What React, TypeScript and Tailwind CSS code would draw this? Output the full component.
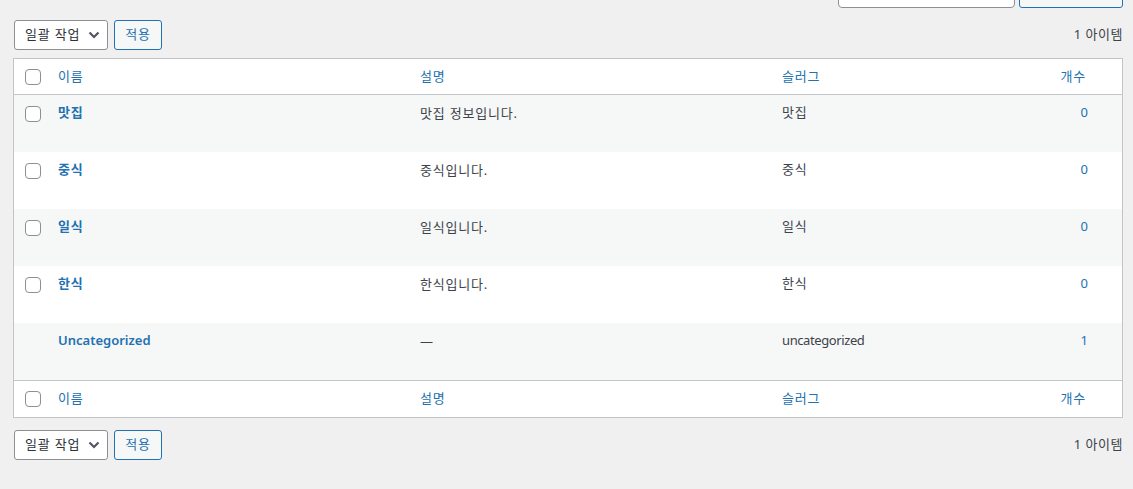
import React from 'react';

const font = { fontFamily: '"Noto Sans", "Noto Sans CJK KR", sans-serif' };

type Cat = { name: string; desc: string; slug: string; count: number; cb: boolean };

const cats: Cat[] = [
  { name: '맛집', desc: '맛집 정보입니다.', slug: '맛집', count: 0, cb: true },
  { name: '중식', desc: '중식입니다.', slug: '중식', count: 0, cb: true },
  { name: '일식', desc: '일식입니다.', slug: '일식', count: 0, cb: true },
  { name: '한식', desc: '한식입니다.', slug: '한식', count: 0, cb: true },
  { name: 'Uncategorized', desc: '—', slug: 'uncategorized', count: 1, cb: false },
];

const cols = 'grid grid-cols-[34px_362px_362px_268px_1fr]';

// hangul in the reference runs a bit wider than Noto CJK at 13px, latin a bit narrower
const ko = (s: string) => (/[가-힣]/.test(s) ? 'tracking-[0.8px]' : '');
const slugTrack = (s: string) => (/[가-힣]/.test(s) ? 'tracking-[0.8px]' : 'tracking-[-0.4px]');

function Checkbox() {
  return <span className="block w-4 h-4 rounded-[4px] border border-[#8c8f94] bg-white" />;
}

function Chevron() {
  return (
    <svg width="12" height="8" viewBox="0 0 12 8" className="text-[#50575e]">
      <path d="M1.5 1.5l4.5 4.5 4.5-4.5" fill="none" stroke="currentColor" strokeWidth="2.2" />
    </svg>
  );
}

function TableNav() {
  return (
    <div className="flex items-center h-[30px] pr-[10px]">
      <div className="flex items-center justify-between w-[94px] h-[30px] ml-px pl-[10px] pr-[7px] border border-[#8c8f94] rounded-[3px] bg-white text-[13px] text-[#2c3338]">
        <span className="tracking-[0.8px]">일괄 작업</span>
        <Chevron />
      </div>
      <div className="flex items-center justify-center w-[48px] h-[30px] ml-[6px] border border-[#2271b1] rounded-[3px] bg-[#f6f7f7] text-[13px] text-[#2271b1] tracking-[0.8px]">
        적용
      </div>
      <div className="ml-auto text-[13px] text-[#3c434a] tracking-[0.5px]">1 아이템</div>
    </div>
  );
}

function HeadRow({ top }: { top?: boolean }) {
  return (
    <div
      className={`${cols} items-center text-[13px] text-[#2271b1] bg-white tracking-[0.8px] ${
        top ? 'h-[36px] border-b border-[#c3c4c7]' : 'h-[37px] border-t border-[#c3c4c7]'
      }`}
    >
      <div className="pl-[11px]">
        <Checkbox />
      </div>
      <div className="pl-[10px]">이름</div>
      <div className="pl-[10px]">설명</div>
      <div className="pl-[10px]">슬러그</div>
      <div className="text-right pr-[36px]">개수</div>
    </div>
  );
}

export default function App() {
  return (
    <div className="min-h-[489px] bg-[#f0f0f1] pl-[13px]" style={font}>
      <div className="flex justify-end h-[8px] overflow-visible pr-[10px]">
        <div className="w-[177px] h-[30px] -mt-[22px] border border-[#8c8f94] rounded-[4px] bg-white" />
        <div className="w-[104px] h-[30px] -mt-[22px] ml-[4px] border border-[#2271b1] rounded-[3px] bg-[#f6f7f7]" />
      </div>

      <div className="mt-[12px]">
        <TableNav />
      </div>

      <div className="mt-[8px] mr-[10px] border border-[#c3c4c7] bg-white">
        <HeadRow top />
        {cats.map((c, i) => (
          <div
            key={c.slug}
            className={`${cols} h-[57px] text-[13px] ${i % 2 === 0 ? 'bg-[#f6f7f7]' : 'bg-white'}`}
          >
            <div className="pl-[11px] pt-[11px]">{c.cb && <Checkbox />}</div>
            <div className={`pl-[10px] pt-[8px] font-semibold text-[#2271b1] ${ko(c.name)}`}>{c.name}</div>
            <div className={`pl-[10px] pt-[9px] text-[#3c434a] ${ko(c.desc)}`}>{c.desc}</div>
            <div className={`pl-[10px] pt-[8px] text-[#3c434a] ${slugTrack(c.slug)}`}>{c.slug}</div>
            <div className="pt-[8px] text-right pr-[34px] text-[#2271b1]">{c.count}</div>
          </div>
        ))}
        <HeadRow />
      </div>

      <div className="mt-[12px]">
        <TableNav />
      </div>
    </div>
  );
}
